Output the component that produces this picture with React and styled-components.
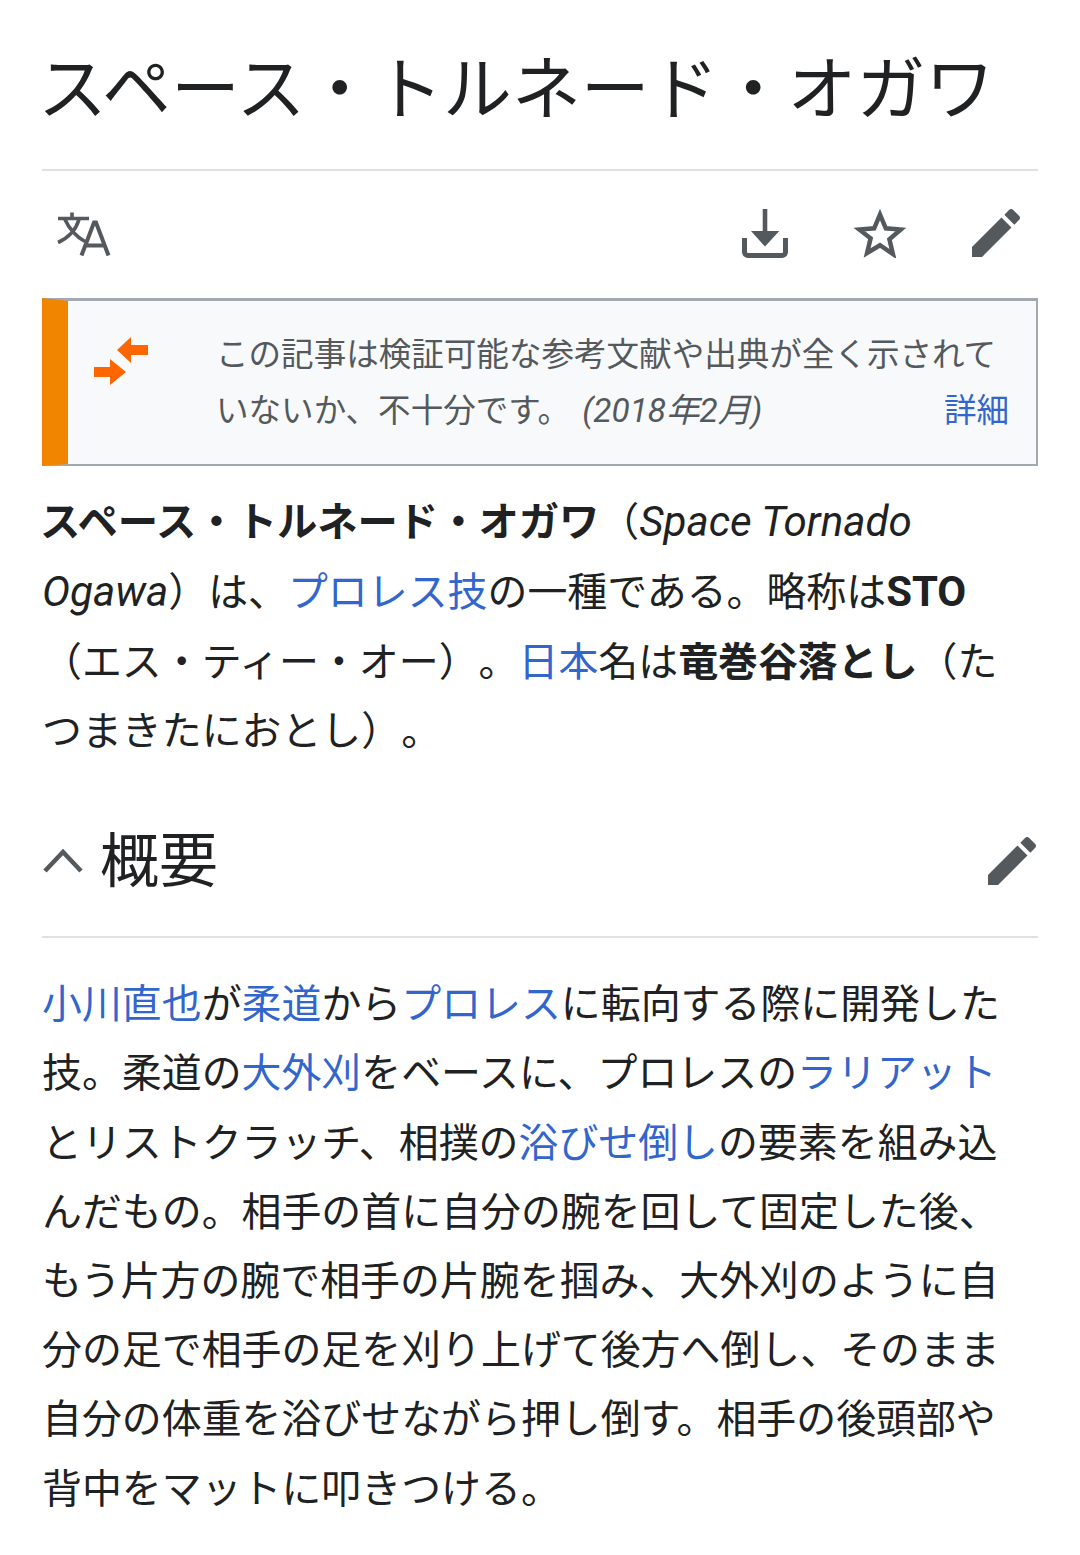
import styled, { createGlobalStyle } from "styled-components";

const GlobalStyle = createGlobalStyle`
  html, body {
    margin: 0;
    padding: 0;
    background: #fff;
  }
  body {
    font-family: Roboto, "Noto Sans CJK JP", sans-serif;
    color: #202122;
    text-spacing-trim: space-all;
  }
`;

const Page = styled.div`
  width: 1080px;
  height: 1555px;
  overflow: hidden;
  padding: 0 42px;
  box-sizing: border-box;
`;

const Title = styled.h1`
  margin: 0;
  height: 169px;
  line-height: 182px;
  font-size: 68.9px;
  font-weight: 400;
  text-indent: -4px;
  white-space: nowrap;
  border-bottom: 2px solid #dfe1e4;
  box-sizing: content-box;
`;

const Toolbar = styled.div`
  display: flex;
  align-items: center;
  height: 127px;
  padding: 0 18px 3px 15px;
  box-sizing: border-box;
`;

const ToolGroup = styled.div`
  display: flex;
  align-items: center;
  gap: 66px;
  margin-left: auto;
`;

const Notice = styled.div`
  display: flex;
  height: 168px;
  box-sizing: border-box;
  background: #f8f9fa;
  border: 2px solid #a2a9b1;
  border-left: 26px solid #f28500;
  border-top-width: 3px;
`;

const NoticeIcon = styled.div`
  width: 148px;
  padding: 36px 0 0 26px;
  box-sizing: border-box;
  flex-shrink: 0;
`;

const NoticeText = styled.div`
  flex: 1;
  padding: 26px 27px 0 0;
  font-size: 32.55px;
  line-height: 56px;
  color: #54595d;
  white-space: nowrap;
`;

const NoticeRow = styled.div`
  display: flex;
  justify-content: space-between;
`;

const NoticeDate = styled.i`
  font-size: 33.4px;
  margin-left: 4px;
`;

const Para = styled.p`
  margin: ${(props) => props.$top}px 0 0;
  font-size: 39.92px;
  line-height: ${(props) => props.$leading}px;
  white-space: nowrap;
`;

const Lead = styled.b`
  font-size: 40.3px;
  margin-left: -2px;
`;

const Latin = styled.i`
  font-size: 1.055em;
`;

const LatinBold = styled.b`
  font-size: 1.05em;
`;

const Link = styled.a`
  color: #36c;
  text-decoration: none;
`;

const SectionHead = styled.div`
  display: flex;
  align-items: center;
  height: 150px;
  margin-top: 3px;
  padding: 17px 2px 0 1px;
  border-bottom: 2px solid #dfe1e4;
  box-sizing: content-box;
`;

const SectionTitle = styled.h2`
  margin: 0 0 0 17px;
  font-size: 59px;
  font-weight: 400;
  line-height: 1;
  flex: 1;
`;

function TranslateIcon() {
  return (
    <svg width="54" height="46" viewBox="0 -1.500 54 46" fill="none" stroke="#54595d" strokeWidth="3.600">
      <path d="M1 7h31M15 1v6M8 8c4 9 11 17 20 22M22 8c-3 10-10 18-21 23" />
      <path d="M24.500 44 37 11h2l12.500 33M29 34h19" strokeWidth="4" />
    </svg>
  );
}

function DownloadIcon() {
  return (
    <svg width="46" height="50" viewBox="0 0 46 50" fill="#54595d">
      <path d="M20.700 1h4.600v22h12L23 38.500 9 23h11.700z" />
      <path d="M2.500 30v14a3.500 3.500 0 0 0 3.500 3.500h34a3.500 3.500 0 0 0 3.500-3.500V30" fill="none" stroke="#54595d" strokeWidth="5" />
    </svg>
  );
}

function StarIcon() {
  return (
    <svg width="52" height="50" viewBox="0 0 52 50" fill="none" stroke="#54595d" strokeWidth="4.500">
      <path d="M26 6.500l5.800 13.800 15 1.200-11.400 9.800 3.500 14.700L26 37.200l-12.900 7.800 3.500-14.700L5.200 21.500l15-1.200z" />
    </svg>
  );
}

function PencilIcon() {
  return (
    <svg width="48" height="48" viewBox="3 3 18 18" fill="#54595d">
      <path d="M3 17.250V21h3.750L17.810 9.940l-3.750-3.750L3 17.250zM20.710 7.040c.39-.39.39-1.020 0-1.410l-2.340-2.340c-.39-.39-1.020-.39-1.410 0l-1.830 1.830 3.750 3.750 1.830-1.830z" />
    </svg>
  );
}

function MergeIcon() {
  return (
    <svg width="56" height="48" viewBox="0 0 56 48" fill="#f60">
      <path d="M23 13 37 0v8h17v10H37v8zM0 30h16v-8l16 13-16 13v-8H0z" />
    </svg>
  );
}

function ChevronIcon() {
  return (
    <svg width="40" height="24" viewBox="0 0 40 24" fill="none" stroke="#54595d" strokeWidth="4.500">
      <path d="M2 22 20 3l18 19" />
    </svg>
  );
}

export default function App() {
  return (
    <Page>
      <GlobalStyle />
      <Title>スペース・トルネード・オガワ</Title>
      <Toolbar>
        <TranslateIcon />
        <ToolGroup>
          <DownloadIcon />
          <StarIcon />
          <PencilIcon />
        </ToolGroup>
      </Toolbar>
      <Notice>
        <NoticeIcon>
          <MergeIcon />
        </NoticeIcon>
        <NoticeText>
          この記事は検証可能な参考文献や出典が全く示されて
          <NoticeRow>
            <span>
              いないか、不十分です。 <NoticeDate>(2018年2月)</NoticeDate>
            </span>
            <Link>詳細</Link>
          </NoticeRow>
        </NoticeText>
      </Notice>
      <Para $top={21} $leading={69.3}>
        <Lead>スペース・トルネード・オガワ</Lead>（<Latin>Space Tornado</Latin>
        <br />
        <Latin>Ogawa</Latin>）は、<Link>プロレス技</Link>の一種である。略称は<LatinBold>STO</LatinBold>
        <br />
        （エス・ティー・オー）。<Link>日本</Link>名は<b>竜巻谷落とし</b>（た
        <br />
        つまきたにおとし）。
      </Para>
      <SectionHead>
        <ChevronIcon />
        <SectionTitle>概要</SectionTitle>
        <PencilIcon />
      </SectionHead>
      <Para $top={32} $leading={69.2}>
        <Link>小川直也</Link>が<Link>柔道</Link>から<Link>プロレス</Link>に転向する際に開発した
        <br />
        技。柔道の<Link>大外刈</Link>をベースに、プロレスの<Link>ラリアット</Link>
        <br />
        とリストクラッチ、相撲の<Link>浴びせ倒し</Link>の要素を組み込
        <br />
        んだもの。相手の首に自分の腕を回して固定した後、
        <br />
        もう片方の腕で相手の片腕を掴み、大外刈のように自
        <br />
        分の足で相手の足を刈り上げて後方へ倒し、そのまま
        <br />
        自分の体重を浴びせながら押し倒す。相手の後頭部や
        <br />
        背中をマットに叩きつける。
      </Para>
    </Page>
  );
}
